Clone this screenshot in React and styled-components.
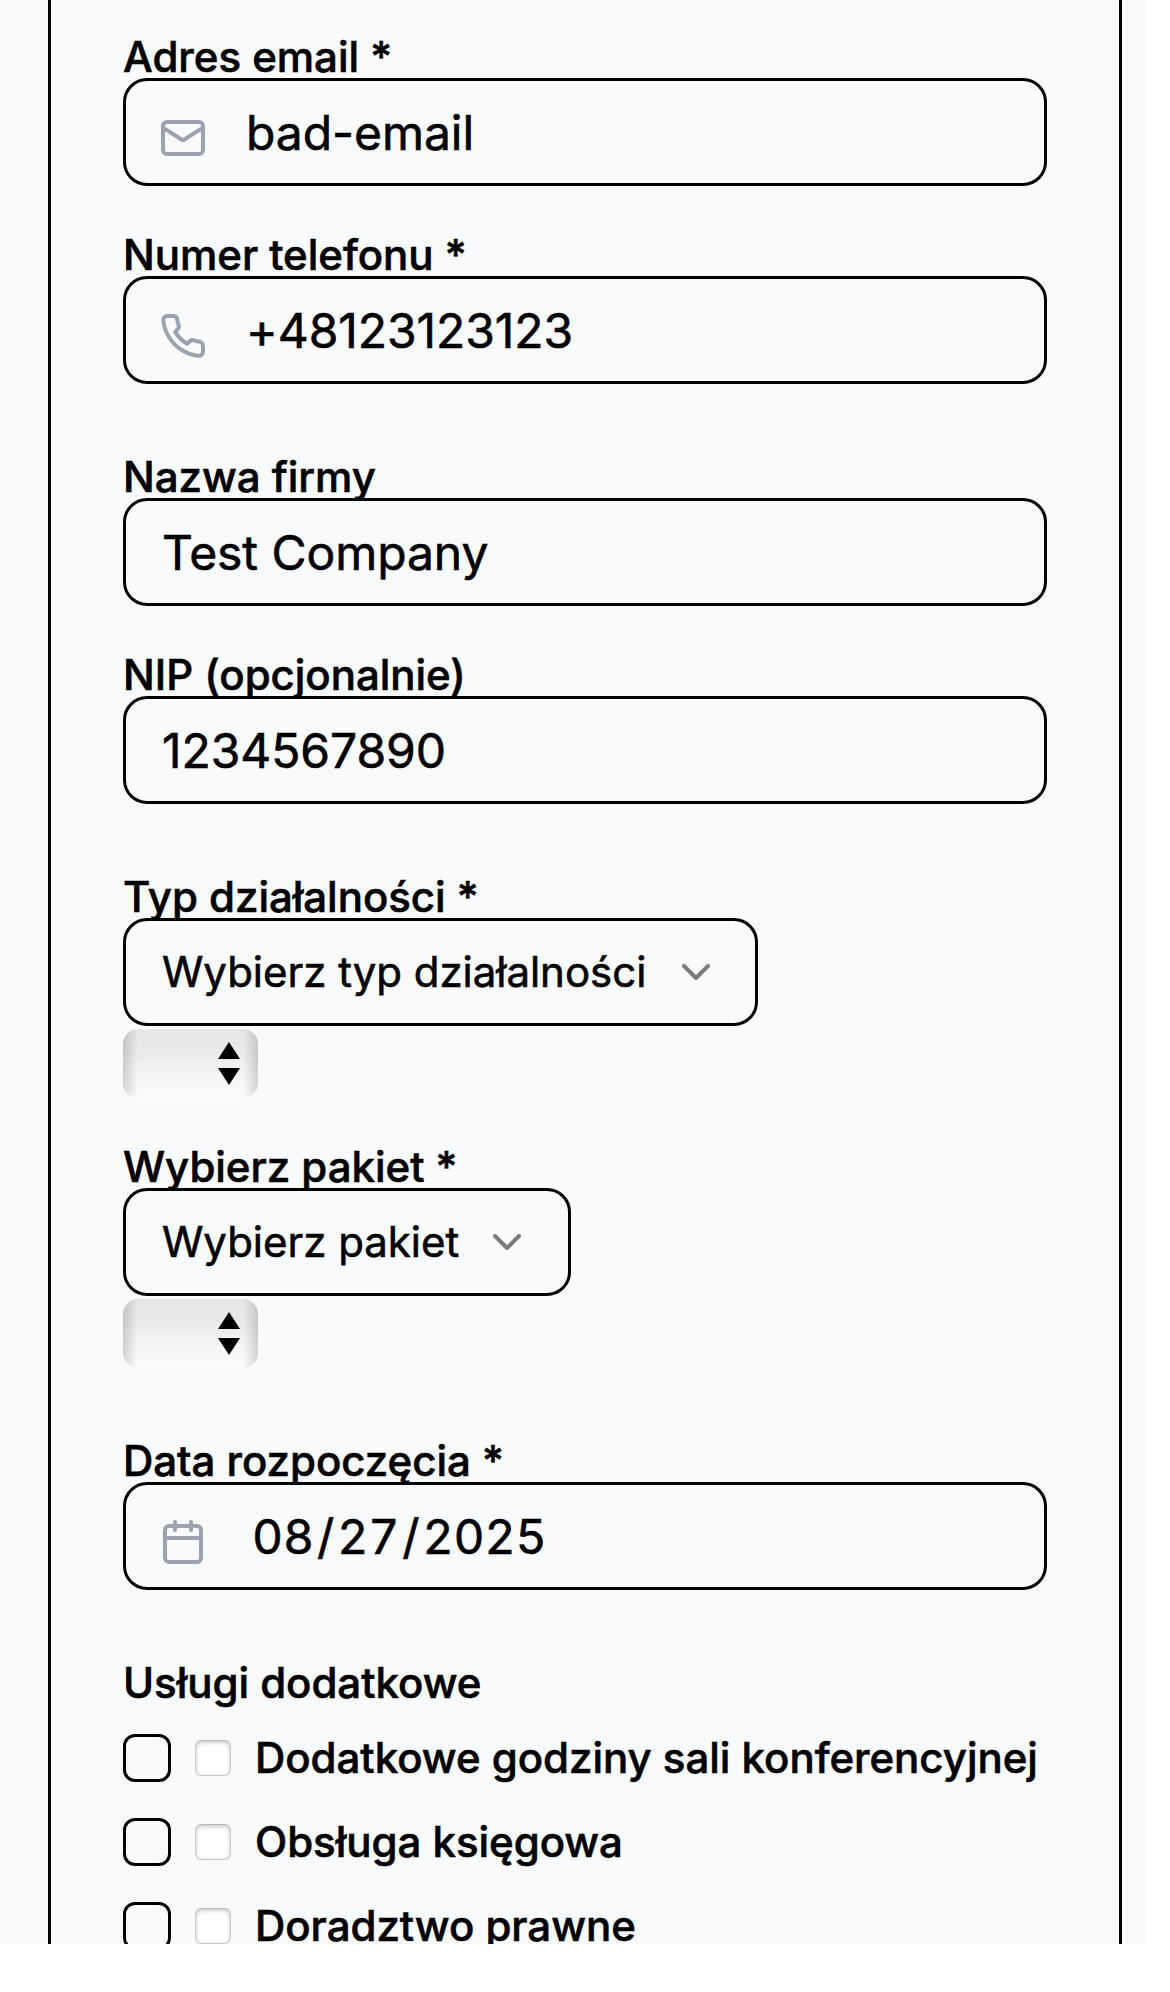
import React from "react";
import styled, { createGlobalStyle } from "styled-components";
import { Calendar, ChevronDown } from "lucide-react";

const GlobalStyle = createGlobalStyle`
  *, *::before, *::after { box-sizing: border-box; }
  html, body { margin: 0; background: #ffffff; }
  body {
    font-family: Inter, "Liberation Sans", sans-serif;
    font-optical-sizing: none;
    color: #000;
    -webkit-text-stroke: 0.6px currentColor;
  }
`;

const Page = styled.main`
  width: 1146px;
  height: 1944px;
  padding: 0 24px 0 48px;
  overflow: hidden;
  background: #f9fafc;
`;

const Card = styled.form`
  display: flex;
  flex-direction: column;
  gap: 72px;
  min-height: 2040px;
  padding: 36px 72px;
  border: solid #000;
  border-width: 0 3px;
  background: #f9fafc;
`;

const Group = styled.div`
  display: flex;
  flex-direction: column;
  gap: 48px;
`;

const Field = styled.div`
  display: flex;
  flex-direction: column;
  align-items: flex-start;
`;

const Label = styled.label`
  font-size: 42px;
  line-height: 42px;
  font-weight: 500;
  letter-spacing: -0.03px;
  white-space: nowrap;
`;

const InputWrap = styled.div`
  position: relative;
  width: 100%;
  height: 108px;
  color: #9ca3af;

  svg {
    position: absolute;
    top: 36px;
    left: 36px;
  }
`;

const Input = styled.input`
  display: block;
  width: 100%;
  height: 108px;
  margin: 0;
  padding: 0 36px 0 ${(p) => (p.$withIcon ? 120 : 36)}px;
  border: 3px solid #000;
  border-radius: 24px;
  outline: none;
  background: #f9fafc;
  color: #000;
  font-family: inherit;
  font-size: 48px;
  font-optical-sizing: none;
  letter-spacing: -0.06px;
  -webkit-text-stroke: 0.6px currentColor;
`;

const DateBox = styled.div`
  display: flex;
  align-items: center;
  width: 100%;
  height: 108px;
  padding: 2px 36px 0 123px;
  border: 3px solid #000;
  border-radius: 24px;
  background: #f9fafc;
  color: #000;
  font-size: 48px;
  line-height: 58px;
  letter-spacing: -0.1px;
  font-variant-numeric: tabular-nums;
`;

const DatePart = styled.span`
  padding: 0 3px;
`;

const Trigger = styled.button`
  display: flex;
  align-items: center;
  justify-content: space-between;
  width: ${(p) => p.$width}px;
  height: 108px;
  padding: 0 ${(p) => p.$end}px 0 36px;
  border: 3px solid #000;
  border-radius: 24px;
  background: #f9fafc;
  color: #000;
  font-family: inherit;
  font-size: 42px;
  line-height: 60px;
  font-optical-sizing: none;
  letter-spacing: -0.03px;
  -webkit-text-stroke: 0.6px currentColor;
  white-space: nowrap;

  svg { opacity: 0.5; }
`;

const NativeSelect = styled.span`
  display: flex;
  align-items: center;
  justify-content: flex-end;
  width: 135px;
  height: 69px;
  margin-top: 3px;
  padding-right: 18px;
  border-radius: 15px;
  background:
    linear-gradient(to right, rgba(0, 0, 0, 0.15), transparent 11%, transparent 89%, rgba(0, 0, 0, 0.15)),
    linear-gradient(#e6e6e6, #eaeaea 35%, #f0f0f0 52%, #fdfdfd);
`;

const Options = styled.div`
  display: flex;
  flex-direction: column;
  gap: 36px;
  margin-top: 30px;
`;

const Option = styled.label`
  display: flex;
  align-items: center;
  gap: 24px;
  height: 48px;
`;

const Box = styled.span`
  flex: none;
  width: 48px;
  height: 48px;
  border: 3px solid #000;
  border-radius: 12px;
`;

const NativeBox = styled.span`
  flex: none;
  width: 36px;
  height: 36px;
  border: 1px solid #cbcbcb;
  border-top-color: #b8b8b8;
  border-radius: 6px;
  background: #fff;
  box-shadow: inset 0 2px 4px rgba(0, 0, 0, 0.18), inset 0 0 3px rgba(0, 0, 0, 0.1);
`;

const OptionText = styled(Label).attrs({ as: "span" })``;

const OutlineIcon = styled.svg.attrs({
  width: 48,
  height: 48,
  viewBox: "0 0 24 24",
  fill: "none",
  stroke: "currentColor",
  strokeWidth: 2,
  strokeLinecap: "round",
  strokeLinejoin: "round",
})``;

function Mail() {
  return (
    <OutlineIcon>
      <rect x="2" y="4" width="20" height="16" rx="2" />
      <path d="M22 6.8 12.5 12.85a.95.95 0 0 1-1 0L2 6.8" />
    </OutlineIcon>
  );
}

function Phone() {
  return (
    <OutlineIcon>
      <path d="M22 16.92v3a2 2 0 0 1-2.18 2 19.79 19.79 0 0 1-8.63-3.07 19.5 19.5 0 0 1-6-6 19.79 19.79 0 0 1-3.07-8.67A2 2 0 0 1 4.11 2h3a2 2 0 0 1 2 1.72 12.84 12.84 0 0 0 .7 2.81 2 2 0 0 1-.45 2.11L8.09 9.91a16 16 0 0 0 6 6l1.27-1.27a2 2 0 0 1 2.11-.45 12.84 12.84 0 0 0 2.81.7A2 2 0 0 1 22 16.92z" />
    </OutlineIcon>
  );
}

function TextField({ label, icon: Icon, value }) {
  return (
    <Field>
      <Label>{label}</Label>
      <InputWrap>
        <Input readOnly value={value} $withIcon={Boolean(Icon)} />
        {Icon && <Icon />}
      </InputWrap>
    </Field>
  );
}

function DateField({ label, month, day, year }) {
  return (
    <Field>
      <Label>{label}</Label>
      <InputWrap>
        <DateBox>
          <DatePart>{month}</DatePart>/<DatePart>{day}</DatePart>/<DatePart>{year}</DatePart>
        </DateBox>
        <Calendar size={48} />
      </InputWrap>
    </Field>
  );
}

function SelectField({ label, placeholder, width, end }) {
  return (
    <Field>
      <Label>{label}</Label>
      <Trigger type="button" $width={width} $end={end}>
        <span>{placeholder}</span>
        <ChevronDown size={48} />
      </Trigger>
      <NativeSelect>
        <svg width="22" height="43" viewBox="0 0 22 43">
          <path d="M11 0L22 17H0zM0 26H22L11 43z" />
        </svg>
      </NativeSelect>
    </Field>
  );
}

const services = ["Dodatkowe godziny sali konferencyjnej", "Obsługa księgowa", "Doradztwo prawne"];

export default function App() {
  return (
    <>
      <GlobalStyle />
      <Page>
        <Card>
          <Group>
            <TextField label="Adres email *" icon={Mail} value="bad-email" />
            <TextField label="Numer telefonu *" icon={Phone} value="+48123123123" />
          </Group>
          <Group>
            <TextField label="Nazwa firmy" value="Test Company" />
            <TextField label="NIP (opcjonalnie)" value="1234567890" />
          </Group>
          <Group>
            <SelectField
              label="Typ działalności *"
              placeholder="Wybierz typ działalności"
              width={635}
              end={35}
            />
            <SelectField label="Wybierz pakiet *" placeholder="Wybierz pakiet" width={448} end={37} />
          </Group>
          <DateField label="Data rozpoczęcia *" month="08" day="27" year="2025" />
          <Field>
            <Label>Usługi dodatkowe</Label>
            <Options>
              {services.map((name) => (
                <Option key={name}>
                  <Box />
                  <NativeBox />
                  <OptionText>{name}</OptionText>
                </Option>
              ))}
            </Options>
          </Field>
        </Card>
      </Page>
    </>
  );
}
